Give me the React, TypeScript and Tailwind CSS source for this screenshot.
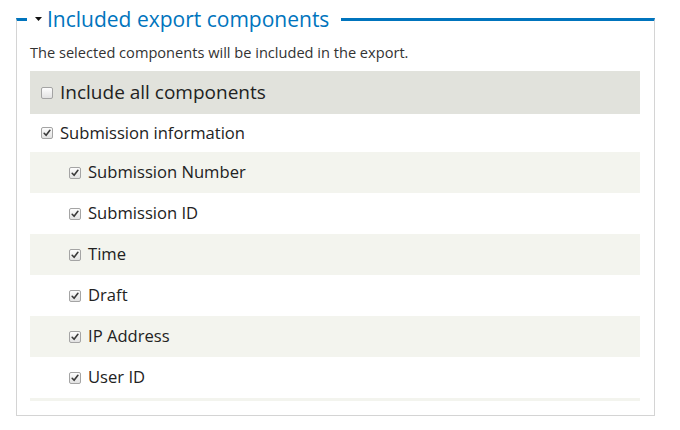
import React from "react";

function Box({ checked }: { checked: boolean }) {
  return (
    <span className="inline-flex h-[12px] w-[12px] shrink-0 items-center justify-center rounded-[2px] border border-[#a4a4a4] bg-gradient-to-b from-[#fdfdfd] to-[#e2e2e2]">
      {checked && (
        <svg width="8" height="8" viewBox="0 0 8 8">
          <path d="M1.2 4.3 L3.1 6.3 L6.9 1.3" fill="none" stroke="#3a3a3a" strokeWidth="1.6" strokeLinecap="round" strokeLinejoin="round" />
        </svg>
      )}
    </span>
  );
}

const children = ["Submission Number", "Submission ID", "Time", "Draft", "IP Address", "User ID"];

export default function App() {
  return (
    <div className="h-[430px] w-[680px] bg-white pl-[16px] pt-[5px] text-[#222]" style={{ fontFamily: '"Open Sans", "Noto Sans", sans-serif' }}>
      <fieldset className="w-[639px] border border-[#d4d4d4] border-t-[3px] border-t-[#0074bd] pl-[13px] pr-[14px] pb-[14px]">
        <legend className="-ml-[3px] flex items-center pl-[8px] pr-[12px] text-[21px] leading-[28px] text-[#0074bd]">
          <svg width="7" height="4" viewBox="0 0 7 4" className="mr-[5px]">
            <path d="M0 0 H7 L3.5 4 Z" fill="#111" />
          </svg>
          Included export components
        </legend>
        <p className="mt-[9px] mb-[9px] text-[14.6px] leading-[20px] text-[#333]">The selected components will be included in the export.</p>
        <div>
          <div className="flex h-[43px] items-center gap-[7px] bg-[#e1e2dc] pl-[11px] text-[19px]">
            <Box checked={false} />
            <span>Include all components</span>
          </div>
          <div className="flex h-[38px] items-center gap-[7px] pl-[11px] text-[16.6px]">
            <Box checked />
            <span>Submission information</span>
          </div>
          {children.map((c, i) => (
            <div key={c} className={`flex h-[41px] items-center gap-[7px] pl-[39px] text-[16.6px] ${i % 2 === 0 ? "bg-[#f3f4ee]" : "bg-white"}`}>
              <Box checked />
              <span>{c}</span>
            </div>
          ))}
          <div className="h-[3px] bg-[#f3f4ee]" />
        </div>
      </fieldset>
    </div>
  );
}
